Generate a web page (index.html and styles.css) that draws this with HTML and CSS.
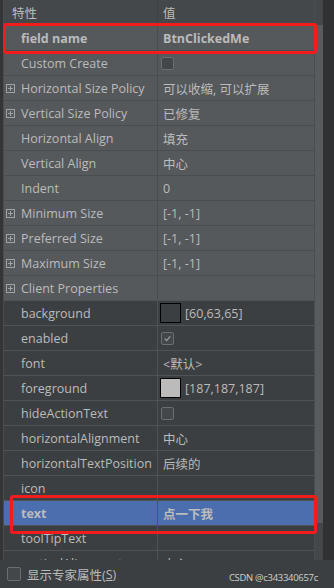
FILE: index.html
```html
<!DOCTYPE html>
<html lang="zh">
<head>
    <meta charset="UTF-8">
    <meta name="viewport" content="width=device-width, initial-scale=1.0">
    <title>Properties</title>
    <link rel="stylesheet" href="styles.css">
</head>
<body>
    <div class="window">
        <div class="edge"></div>
        <div class="sheet">
            <div class="row head"><div class="k">特性</div><div class="v">值</div></div>
            <div class="row upper bold"><div class="k">field name</div><div class="v">BtnClickedMe</div></div>
            <div class="row upper"><div class="k">Custom Create</div><div class="v"><span class="box"></span></div></div>
            <div class="row upper"><div class="k"><svg class="plus" viewBox="0 0 9 9"><rect x="0.5" y="0.5" width="8" height="8"/><path d="M2 4.5h5M4.5 2v5"/></svg>Horizontal Size Policy</div><div class="v">可以收缩, 可以扩展</div></div>
            <div class="row upper"><div class="k"><svg class="plus" viewBox="0 0 9 9"><rect x="0.5" y="0.5" width="8" height="8"/><path d="M2 4.5h5M4.5 2v5"/></svg>Vertical Size Policy</div><div class="v">已修复</div></div>
            <div class="row upper"><div class="k">Horizontal Align</div><div class="v">填充</div></div>
            <div class="row upper"><div class="k">Vertical Align</div><div class="v">中心</div></div>
            <div class="row upper"><div class="k">Indent</div><div class="v">0</div></div>
            <div class="row upper"><div class="k"><svg class="plus" viewBox="0 0 9 9"><rect x="0.5" y="0.5" width="8" height="8"/><path d="M2 4.5h5M4.5 2v5"/></svg>Minimum Size</div><div class="v">[-1, -1]</div></div>
            <div class="row upper"><div class="k"><svg class="plus" viewBox="0 0 9 9"><rect x="0.5" y="0.5" width="8" height="8"/><path d="M2 4.5h5M4.5 2v5"/></svg>Preferred Size</div><div class="v">[-1, -1]</div></div>
            <div class="row upper"><div class="k"><svg class="plus" viewBox="0 0 9 9"><rect x="0.5" y="0.5" width="8" height="8"/><path d="M2 4.5h5M4.5 2v5"/></svg>Maximum Size</div><div class="v">[-1, -1]</div></div>
            <div class="row upper"><div class="k"><svg class="plus" viewBox="0 0 9 9"><rect x="0.5" y="0.5" width="8" height="8"/><path d="M2 4.5h5M4.5 2v5"/></svg>Client Properties</div><div class="v"></div></div>
            <div class="row"><div class="k">background</div><div class="v"><span class="swatch dark"></span>[60,63,65]</div></div>
            <div class="row"><div class="k">enabled</div><div class="v"><span class="box"><svg viewBox="0 0 14 14"><path d="M3.5 7.2l2.4 2.5 4.6-5.4"/></svg></span></div></div>
            <div class="row"><div class="k">font</div><div class="v">&lt;默认&gt;</div></div>
            <div class="row"><div class="k">foreground</div><div class="v"><span class="swatch light"></span>[187,187,187]</div></div>
            <div class="row"><div class="k">hideActionText</div><div class="v"><span class="box"></span></div></div>
            <div class="row"><div class="k">horizontalAlignment</div><div class="v">中心</div></div>
            <div class="row"><div class="k">horizontalTextPosition</div><div class="v">后续的</div></div>
            <div class="row"><div class="k">icon</div><div class="v"></div></div>
            <div class="row selected bold"><div class="k">text</div><div class="v">点一下我</div></div>
            <div class="row"><div class="k">toolTipText</div><div class="v"></div></div>
            <div class="row"><div class="k">verticalAlignment</div><div class="v">中心</div></div>
        </div>
        <div class="scroll"><div class="thumb"></div></div>
        <div class="gutter"></div>
        <div class="mark mark-name"></div>
        <div class="mark mark-text"></div>
    </div>
    <div class="footer">
        <label class="expert"><span class="box"></span>显示专家属性(<u>S</u>)</label>
        <span class="credit">CSDN @c343340657c</span>
    </div>
</body>
</html>
```

FILE: styles.css
```css
body {
    margin: 0;
    background-color: #3c3f41;
    color: #bbbbbb;
    font-family: "Open Sans", "Noto Sans CJK SC", sans-serif;
    font-size: 12.5px;
    width: 334px;
    height: 588px;
    overflow: hidden;
}
.window {
    position: relative;
    display: flex;
    height: 560px;
}
.edge {
    width: 3px;
    background-color: #333537;
    border-right: 1px solid #4a4d4f;
}
.sheet {
    width: 310px;
    overflow: hidden;
}
.row {
    display: grid;
    grid-template-columns: 154px 1fr;
    height: 25px;
    box-sizing: border-box;
    border-top: 1px solid #505355;
    background-color: #3c3f41;
}
.row .k, .row .v {
    display: flex;
    align-items: center;
    white-space: nowrap;
}
.row .k {
    padding-left: 17px;
    border-right: 1px solid #505355;
    position: relative;
}
.row .v {
    padding-left: 5px;
}
.row.head {
    border-top: none;
    background-color: #45484a;
}
.row.head .k {
    padding-left: 8px;
    border-right-color: #3f4244;
}
.row.upper {
    background-color: #56595b;
    border-top-color: #4a4d4f;
}
.row.upper .k {
    border-right-color: #4a4d4f;
}
.row.bold {
    font-weight: bold;
}
.row.selected {
    background-color: #4b6eaf;
}
.plus {
    position: absolute;
    left: 2px;
    top: 8px;
    width: 9px;
    height: 9px;
    fill: none;
    stroke: #a0a3a5;
    stroke-width: 1;
}
.box {
    display: inline-block;
    width: 13px;
    height: 13px;
    box-sizing: border-box;
    border: 1px solid #6b6e70;
    border-radius: 2px;
    background-color: #43474a;
    margin-left: -2px;
}
.box svg {
    display: block;
    width: 11px;
    height: 11px;
    fill: none;
    stroke: #9c9fa1;
    stroke-width: 1.6;
}
.swatch {
    display: inline-block;
    width: 21px;
    height: 20px;
    box-sizing: border-box;
    border: 1px solid #000;
    margin-left: -3px;
    margin-right: 4px;
}
.swatch.dark {
    background-color: #3c3f41;
}
.swatch.light {
    background-color: #bbbbbb;
}
.scroll {
    width: 8px;
    background-color: #45484a;
    border-left: 1px solid #4a4d4f;
}
.thumb {
    margin-top: 25px;
    height: 498px;
    background-color: #595c5e;
}
.gutter {
    flex: 1;
    background-color: #2f3133;
}
.mark {
    position: absolute;
    border: 3px solid #f21c1c;
    border-radius: 3px;
    box-sizing: border-box;
}
.mark-name {
    left: 3px;
    top: 23px;
    width: 314px;
    height: 31px;
}
.mark-text {
    left: 10px;
    top: 495px;
    width: 307px;
    height: 39px;
}
.footer {
    height: 28px;
    display: flex;
    align-items: center;
    justify-content: space-between;
    padding: 0 16px 0 7px;
    background-color: #3c3f41;
}
.expert {
    display: flex;
    align-items: center;
    font-size: 12.5px;
}
.expert .box {
    width: 14px;
    height: 14px;
    margin: 0 6px 0 0;
}
.credit {
    font-size: 9.5px;
    letter-spacing: -0.3px;
    color: #d0d0d0;
    margin-top: 6px;
}
```
